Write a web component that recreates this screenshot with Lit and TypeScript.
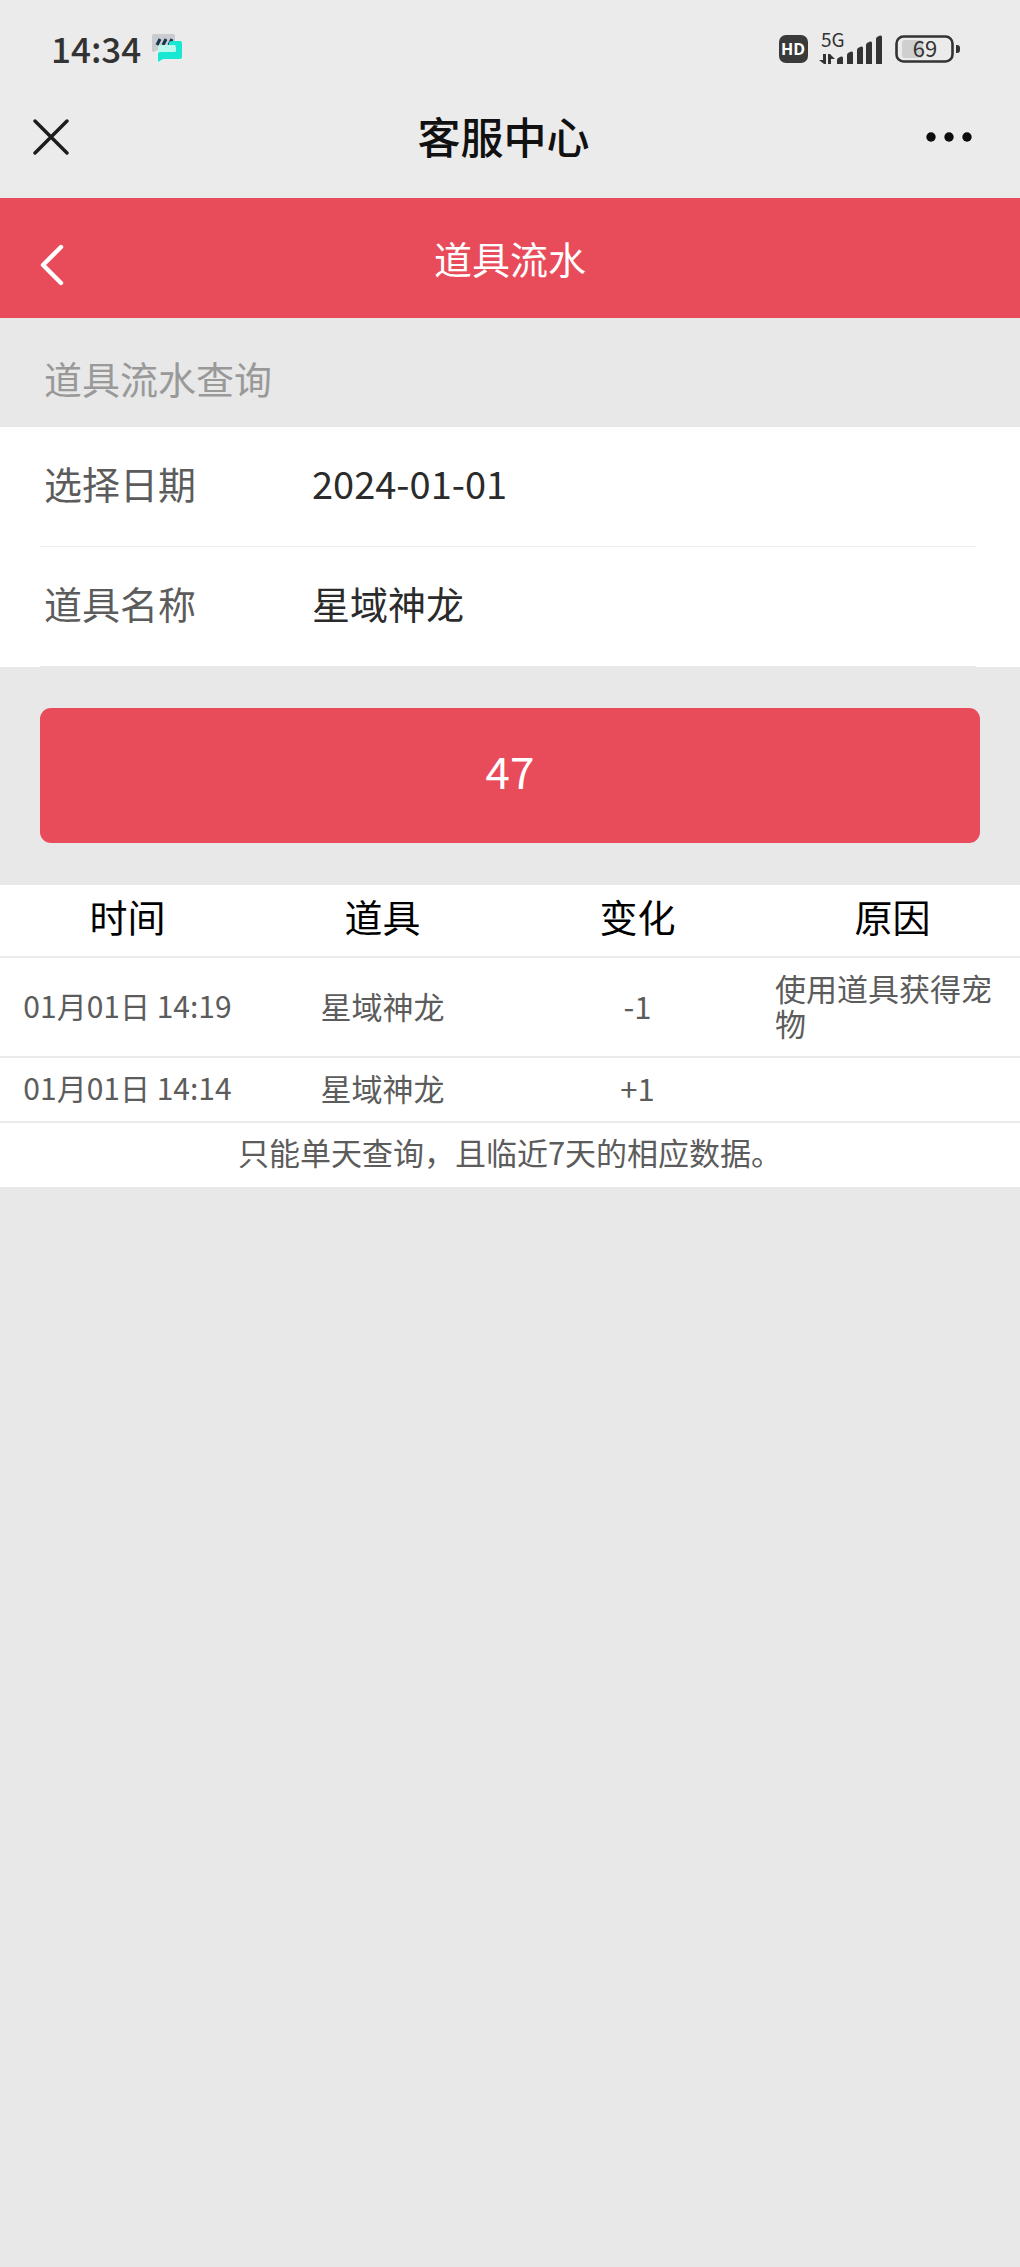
import { LitElement, html, svg, css } from "lit";
import { customElement, state } from "lit/decorators.js";

interface FlowRecord {
  time: string;
  item: string;
  change: string;
  reason: string;
}

const RECORDS: FlowRecord[] = [
  { time: "01月01日 14:19", item: "星域神龙", change: "-1", reason: "使用道具获得宠物" },
  { time: "01月01日 14:14", item: "星域神龙", change: "+1", reason: "" },
];

const COLUMNS = ["时间", "道具", "变化", "原因"];

@customElement("status-bar")
class StatusBar extends LitElement {
  static styles = css`
    :host {
      display: flex;
      align-items: center;
      justify-content: space-between;
      height: 72px;
      padding: 26px 59px 0 51px;
      box-sizing: border-box;
      color: #333;
    }
    .side {
      display: flex;
      align-items: center;
    }
    .left { gap: 11px; }
    .right { gap: 11px; }
    .time {
      font-size: 35px;
      line-height: 48px;
      font-weight: 500;
      padding-bottom: 2px;
    }
    svg {
      display: block;
      font-family: "Noto Sans CJK SC", sans-serif;
    }
    .hd {
      font: 700 16px "Open Sans", sans-serif;
    }
    .net { font-size: 19px; }
    .level { font-size: 22px; }
  `;

  private bars() {
    // Each bar rises to the right with a slanted top edge.
    const tops = [25, 20, 15, 10, 4];
    return tops.map((top, i) => {
      const x = 18 + i * 10 - (i > 2 ? 1 : 0);
      return svg`<path d="M${x} 32V${top + 3}Q${x} ${top + 2} ${x + 1} ${top + 1}L${x + 4} ${top - 0.5}Q${x + 6} ${top - 1} ${x + 6} ${top + 1}V32Z"></path>`;
    });
  }

  render() {
    return html`
      <div class="side left">
        <span class="time">14:34</span>
        <svg width="31" height="30" viewBox="0 0 31 30" aria-hidden="true">
          <path d="M2 0H21Q23 0 23 2V14Q23 16 21 16H6L1 18Q0 18 0 16V2Q0 0 2 0Z" fill="#c9cbd0"></path>
          <path d="M5 11L8 5M11 11L14 5M17 11L20 5" stroke="#19344f" stroke-width="3"></path>
          <path d="M20 7H28Q30 7 30 9V23Q30 25 28 25H11L6 28V20Q6 18 8 18H17V9Q17 7 20 7Z" fill="#18e8d2"></path>
          <path d="M8 11H20Q24 10 24 14V17Q24 18 22 18H9Q6 18 6 16V13Q6 11 8 11Z" fill="#b8f8ed"></path>
        </svg>
      </div>
      <div class="side right">
        <svg width="29" height="28" viewBox="0 0 29 28" aria-hidden="true">
          <rect width="29" height="28" rx="7" fill="#3a3a3a"></rect>
          <text class="hd" x="14" y="20" fill="#fff" text-anchor="middle">HD</text>
        </svg>
        <svg width="65" height="50" viewBox="0 -8 65 50" fill="#333" aria-hidden="true">
          <text class="net" x="2" y="15">5G</text>
          <path d="M4 22H7V32H5L0 28H4ZM9 32V22H11L16 27H12V32Z"></path>
          ${this.bars()}
        </svg>
        <svg width="66" height="40" viewBox="0 -6 66 40" aria-hidden="true">
          <rect x="7" y="5" width="21" height="18" rx="3" fill="#cfcfcf"></rect>
          <rect x="1.5" y="1.5" width="56" height="25" rx="7" fill="none" stroke="#333" stroke-width="2.6"></rect>
          <path d="M61 10H62Q65 10 65 13V15Q65 18 62 18H61Z" fill="#333"></path>
          <text class="level" x="30" y="22" fill="#333" text-anchor="middle">69</text>
        </svg>
      </div>
    `;
  }
}

@customElement("app-root")
class AppRoot extends LitElement {
  static styles = css`
    :host {
      display: block;
      min-height: 100vh;
      background: #e8e8e8;
      color: #000;
      font-family: "Noto Sans CJK SC", sans-serif;
      font-size: 38px;
      line-height: 56px;
    }
    button, input {
      margin: 0;
      padding: 0;
      border: 0;
      background: none;
      color: inherit;
      font: inherit;
      outline: none;
    }
    button { cursor: pointer; }
    svg { display: block; }
    h1, h2, p {
      margin: 0;
      font-size: 38px;
      font-weight: 400;
    }
    .top { background: #ebebeb; }
    .bar {
      display: grid;
      grid-template-columns: 80px 1fr 92px;
      align-items: center;
      text-align: center;
    }
    .nav {
      height: 126px;
      padding: 0 25px 0 24px;
      color: #111;
    }
    .nav .title {
      font-size: 43px;
      font-weight: 500;
      line-height: 64px;
    }
    .icon {
      display: grid;
      place-items: center;
      height: 72px;
    }
    .nav .icon { padding-top: 4px; }
    .nav .close { width: 54px; }
    .header {
      grid-template-columns: 80px 1fr 80px;
      height: 120px;
      padding: 0 12px;
      background: #e84c5b;
      color: #fff;
    }
    .header .back { padding-top: 14px; }
    .section {
      padding: 32px 44px 21px;
      color: #999;
    }
    .form {
      padding: 0 44px 0 40px;
      background: #fff;
    }
    .field {
      display: grid;
      grid-template-columns: 268px 1fr;
      align-items: center;
      height: 112px;
      padding: 0 0 7px 4px;
      border-bottom: 1px solid #f0f0f0;
      color: #5c5c5c;
    }
    .field:last-child { border-color: #e8e8e8; }
    .value {
      width: 100%;
      min-width: 0;
      height: 56px;
      color: #2b2b2b;
    }
    .action { padding: 41px 40px 42px; }
    .submit {
      width: 100%;
      height: 135px;
      padding-bottom: 12px;
      border-radius: 11px;
      background: #e84c5b;
      color: #fff;
      font-size: 44px;
    }
    .result { background: #fff; }
    .records {
      width: 100%;
      table-layout: fixed;
      border-collapse: collapse;
    }
    .records th {
      padding: 3px 0 12px;
      font-weight: 400;
    }
    .records tr { border-bottom: 2px solid #ebebeb; }
    .records td {
      padding: 12px 0 16px;
      color: #5c5c5c;
      font-size: 31px;
      line-height: 35px;
      text-align: center;
    }
    .records td.when {
      font-size: 30px;
      white-space: nowrap;
    }
    .records td.reason {
      padding: 12px 10px 16px;
      text-align: left;
    }
    .note {
      padding: 11px 0 18px;
      color: #5c5c5c;
      font-size: 31px;
      line-height: 35px;
      text-align: center;
    }
  `;

  @state() private date = "2024-01-01";
  @state() private itemName = "星域神龙";

  render() {
    return html`
      <div class="top">
        <status-bar></status-bar>
        <div class="bar nav">
          <button class="icon close" aria-label="关闭">
            <svg width="36" height="36" viewBox="0 0 36 36" fill="none" stroke="#1c1c1c" stroke-width="3.4" stroke-linecap="round">
              <path d="M2 2L34 34M34 2L2 34"></path>
            </svg>
          </button>
          <h1 class="title">客服中心</h1>
          <button class="icon" aria-label="更多">
            <svg width="48" height="12" viewBox="0 0 48 12" fill="#0c0c0c">
              <circle cx="6" cy="6" r="4.7"></circle>
              <circle cx="24" cy="6" r="4.7"></circle>
              <circle cx="42" cy="6" r="4.7"></circle>
            </svg>
          </button>
        </div>
      </div>
      <div class="bar header">
        <button class="icon back" aria-label="返回">
          <svg width="24" height="42" viewBox="0 0 24 42" fill="none" stroke="#fff" stroke-width="4.4" stroke-linecap="round" stroke-linejoin="round">
            <path d="M21 3L3 21L21 39"></path>
          </svg>
        </button>
        <h2>道具流水</h2>
      </div>
      <p class="section">道具流水查询</p>
      <div class="form">
        <div class="field">
          <label for="date">选择日期</label>
          <input class="value" id="date" type="text" .value=${this.date}
            @input=${(e: Event) => (this.date = (e.target as HTMLInputElement).value)} />
        </div>
        <div class="field">
          <label for="item">道具名称</label>
          <input class="value" id="item" type="text" .value=${this.itemName}
            @input=${(e: Event) => (this.itemName = (e.target as HTMLInputElement).value)} />
        </div>
      </div>
      <div class="action">
        <button class="submit">47</button>
      </div>
      <div class="result">
        <table class="records">
          <thead>
            <tr>${COLUMNS.map((name) => html`<th scope="col">${name}</th>`)}</tr>
          </thead>
          <tbody>
            ${RECORDS.map(
              (r) => html`
                <tr>
                  <td class="when">${r.time}</td>
                  <td>${r.item}</td>
                  <td>${r.change}</td>
                  <td class="reason">${r.reason}</td>
                </tr>
              `
            )}
          </tbody>
        </table>
        <p class="note">只能单天查询，且临近7天的相应数据。</p>
      </div>
    `;
  }
}
